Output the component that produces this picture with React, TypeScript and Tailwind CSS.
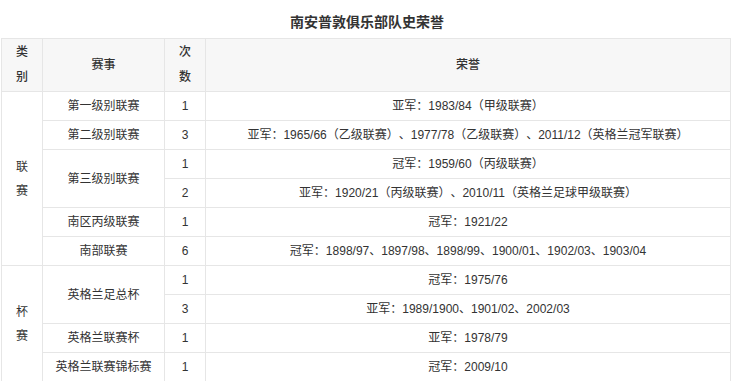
import React from "react";

type Row = {
  cat?: { text: string[]; span: number };
  event?: { text: string; span: number };
  count: string;
  honor: string;
};

const rows: Row[] = [
  { cat: { text: ["联", "赛"], span: 6 }, event: { text: "第一级别联赛", span: 1 }, count: "1", honor: "亚军：1983/84（甲级联赛）" },
  { event: { text: "第二级别联赛", span: 1 }, count: "3", honor: "亚军：1965/66（乙级联赛）、1977/78（乙级联赛）、2011/12（英格兰冠军联赛）" },
  { event: { text: "第三级别联赛", span: 2 }, count: "1", honor: "冠军：1959/60（丙级联赛）" },
  { count: "2", honor: "亚军：1920/21（丙级联赛）、2010/11（英格兰足球甲级联赛）" },
  { event: { text: "南区丙级联赛", span: 1 }, count: "1", honor: "冠军：1921/22" },
  { event: { text: "南部联赛", span: 1 }, count: "6", honor: "冠军：1898/97、1897/98、1898/99、1900/01、1902/03、1903/04" },
  { cat: { text: ["杯", "赛"], span: 4 }, event: { text: "英格兰足总杯", span: 2 }, count: "1", honor: "冠军：1975/76" },
  { count: "3", honor: "亚军：1989/1900、1901/02、2002/03" },
  { event: { text: "英格兰联赛杯", span: 1 }, count: "1", honor: "亚军：1978/79" },
  { event: { text: "英格兰联赛锦标赛", span: 1 }, count: "1", honor: "冠军：2009/10" },
];

const cell = "border border-[#e6e6e6] text-center align-middle p-0";

export default function App() {
  return (
    <div
      className="w-[734px] h-[381px] overflow-hidden bg-white text-[#333] text-[12px] [text-spacing-trim:space-all]"
      style={{ fontFamily: '"Liberation Sans", Arial, "Noto Sans CJK SC", sans-serif' }}
    >
      <div className="h-[38px] pt-[14px] text-center text-[14px] font-bold leading-[16px]">
        南安普敦俱乐部队史荣誉
      </div>
      <table className="ml-[1px] w-[730px] border-collapse table-fixed">
        <colgroup>
          <col className="w-[41px]" />
          <col className="w-[122px]" />
          <col className="w-[41px]" />
          <col />
        </colgroup>
        <thead>
          <tr className="h-[53px] bg-[#f7f7f7] font-medium">
            <th className={`${cell} font-medium leading-[25px]`}>
              类<br />别
            </th>
            <th className={`${cell} font-medium`}>赛事</th>
            <th className={`${cell} font-medium leading-[25px]`}>
              次<br />数
            </th>
            <th className={`${cell} font-medium`}>荣誉</th>
          </tr>
        </thead>
        <tbody>
          {rows.map((r, i) => (
            <tr key={i} className="h-[29px]">
              {r.cat && (
                <td rowSpan={r.cat.span} className={`${cell} leading-[24px]`}>
                  {r.cat.text[0]}
                  <br />
                  {r.cat.text[1]}
                </td>
              )}
              {r.event && (
                <td rowSpan={r.event.span} className={cell}>
                  {r.event.text}
                </td>
              )}
              <td className={cell}>{r.count}</td>
              <td className={cell}>{r.honor}</td>
            </tr>
          ))}
        </tbody>
      </table>
    </div>
  );
}
